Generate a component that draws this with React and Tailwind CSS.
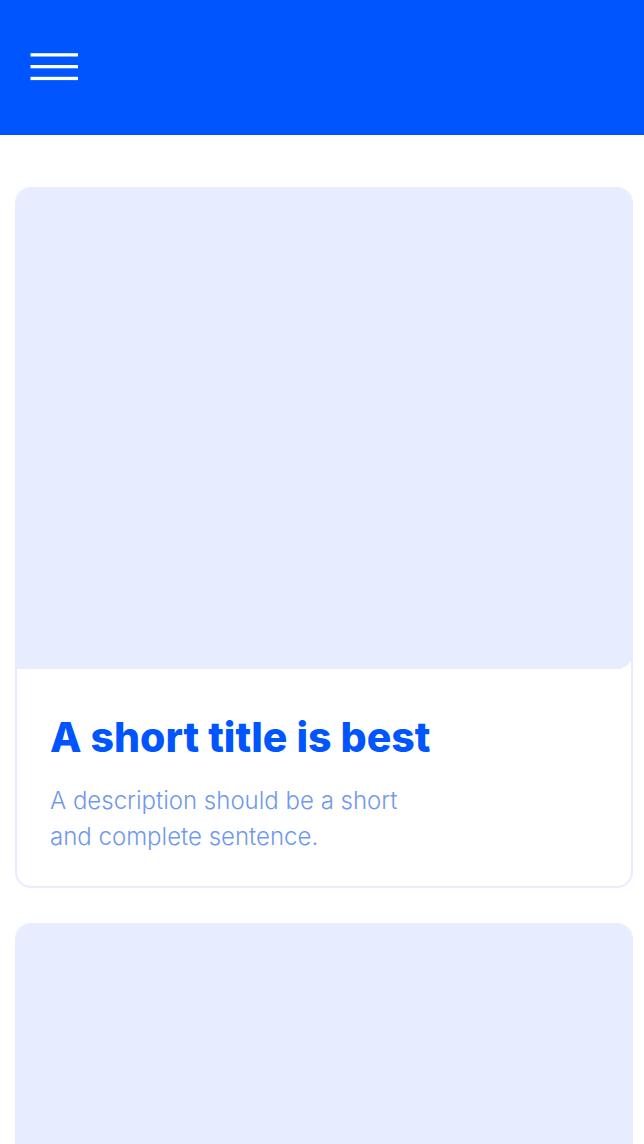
function Card({ title, children }) {
  return (
    <article className="overflow-hidden rounded-2xl border-2 border-[#e7ecff] bg-white">
      <div className="-mx-0.5 -mt-0.5 h-[482px] rounded-br-2xl bg-[#e7ecff]" />
      {title && (
        <div className="px-[33px] pt-11 pb-[31px]">
          <h2 className="text-[41px] leading-[48px] font-extrabold text-[#0055ff]">{title}</h2>
          <p className="mt-[22px] max-w-[380px] text-2xl leading-9 font-light text-[#6f98ef]">{children}</p>
        </div>
      )}
    </article>
  );
}

export default function App() {
  return (
    <div className="min-h-screen bg-white font-['Inter',sans-serif]">
      <header className="flex h-[135px] items-center bg-[#0055ff] px-[30px] pb-0.5">
        <button type="button" aria-label="Menu" className="text-white">
          <svg className="block" width="48" height="28" viewBox="0 0 48 28" fill="currentColor" aria-hidden="true">
            <rect x="0.5" y="0.2" width="47.5" height="3.3" />
            <rect x="0.5" y="12" width="47.5" height="3.3" />
            <rect x="0.5" y="23.8" width="47.5" height="3.3" />
          </svg>
        </button>
      </header>
      <main className="flex flex-col gap-[35px] pt-[52px] pr-[11px] pl-[15px]">
        <Card title="A short title is best">A description should be a short and complete sentence.</Card>
        <Card />
      </main>
    </div>
  );
}
